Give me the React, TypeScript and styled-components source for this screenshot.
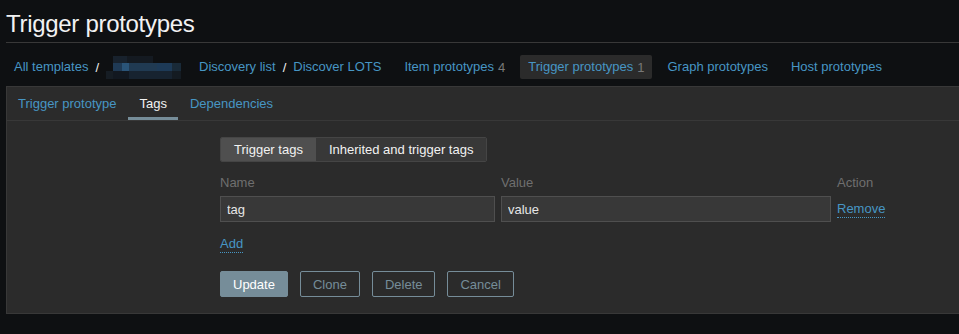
import styled, { createGlobalStyle } from 'styled-components';

const GlobalStyle = createGlobalStyle`
    html, body {
        margin: 0;
        padding: 0;
        background: #0e1012;
    }
    body {
        font-family: "Liberation Sans", Arial, sans-serif;
        font-size: 13px;
        color: #f2f2f2;
    }
    * {
        box-sizing: border-box;
    }
`

type Crumb = { label: string; count?: number; active?: boolean }

const menuItems: Crumb[] = [
    { label: 'Item prototypes', count: 4 },
    { label: 'Trigger prototypes', count: 1, active: true },
    { label: 'Graph prototypes' },
    { label: 'Host prototypes' },
]

// pixelated template name, as in the screenshot
const blurBlocks = [
    { x: 7, y: 0, w: 14, h: 7, c: '#18222d' },
    { x: 21, y: 0, w: 26, h: 7, c: '#141a21' },
    { x: 7, y: 7, w: 9, h: 8, c: '#1f3a55' },
    { x: 16, y: 7, w: 7, h: 8, c: '#2a5478' },
    { x: 23, y: 7, w: 28, h: 8, c: '#203a52' },
    { x: 51, y: 7, w: 15, h: 8, c: '#1d3a57' },
    { x: 66, y: 7, w: 9, h: 8, c: '#192a38' },
    { x: 0, y: 15, w: 7, h: 8, c: '#161d24' },
    { x: 7, y: 15, w: 16, h: 8, c: '#121820' },
    { x: 23, y: 15, w: 43, h: 8, c: '#172330' },
    { x: 66, y: 15, w: 9, h: 8, c: '#141b22' },
]

const BlurredName = () => (
    <BlurWrap>
        <svg width="75" height="24" viewBox="0 0 75 24">
            {blurBlocks.map((b, i) => (
                <rect key={i} x={b.x} y={b.y + 1} width={b.w} height={b.h} fill={b.c} />
            ))}
        </svg>
    </BlurWrap>
)

const App = () => {
    return (
        <>
            <GlobalStyle />
            <Page>
                <Header>
                    <Title>Trigger prototypes</Title>
                </Header>

                <Breadcrumbs>
                    <CrumbGroup>
                        <Link href="#">All templates</Link>
                        <Slash>/</Slash>
                        <BlurredName />
                    </CrumbGroup>
                    <CrumbGroup>
                        <Link href="#">Discovery list</Link>
                        <Slash>/</Slash>
                        <Link href="#">Discover LOTS</Link>
                    </CrumbGroup>
                    {menuItems.map((item) => (
                        <CrumbGroup key={item.label} $active={item.active}>
                            <Link href="#">{item.label}</Link>
                            {item.count !== undefined && <Count>{item.count}</Count>}
                        </CrumbGroup>
                    ))}
                </Breadcrumbs>

                <Panel>
                    <TabBar>
                        <Tab>Trigger prototype</Tab>
                        <Tab $active>Tags</Tab>
                        <Tab>Dependencies</Tab>
                    </TabBar>

                    <FormBody>
                        <Segmented>
                            <Segment $selected>Trigger tags</Segment>
                            <Segment>Inherited and trigger tags</Segment>
                        </Segmented>

                        <TagTable>
                            <ColHead>Name</ColHead>
                            <ColHead>Value</ColHead>
                            <ColHead>Action</ColHead>
                            <TextInput defaultValue="tag" />
                            <TextInput defaultValue="value" />
                            <ActionCell>
                                <DottedLink>Remove</DottedLink>
                            </ActionCell>
                        </TagTable>

                        <AddRow>
                            <DottedLink>Add</DottedLink>
                        </AddRow>

                        <ButtonRow>
                            <Button $primary>Update</Button>
                            <Button>Clone</Button>
                            <Button>Delete</Button>
                            <Button>Cancel</Button>
                        </ButtonRow>
                    </FormBody>
                </Panel>
            </Page>
        </>
    );
}

export default App;

const Page = styled.div`
    padding-left: 6px;
    width: 100%;
    min-height: 334px;
`

const Header = styled.header`
    padding: 12px 0 6px;
    border-bottom: 1px solid #383838;
`

const Title = styled.h1`
    margin: 0;
    font-size: 24px;
    line-height: 24px;
    font-weight: 400;
    letter-spacing: -0.3px;
    color: #f2f2f2;
`

const Breadcrumbs = styled.nav`
    display: flex;
    align-items: center;
    gap: 7px;
    padding: 12px 0 7px;
`

const CrumbGroup = styled.div<{ $active?: boolean }>`
    display: flex;
    align-items: center;
    height: 24px;
    padding: 0 8px;
    border-radius: 2px;
    background: ${(p) => (p.$active ? '#2b2b2b' : 'transparent')};
`

const Link = styled.a`
    color: #4796c4;
    text-decoration: none;
    line-height: 24px;
    white-space: nowrap;
`

const Slash = styled.span`
    color: #f2f2f2;
    margin: 0 7px;
`

const Count = styled.span`
    color: #787878;
    margin-left: 4px;
`

const BlurWrap = styled.span`
    display: flex;
    height: 24px;
    margin-right: -5px;
`

const Panel = styled.section`
    background: #2b2b2b;
    border: 1px solid #383838;
    border-right: none;
`

const TabBar = styled.div`
    display: flex;
    border-bottom: 1px solid #383838;
`

const Tab = styled.div<{ $active?: boolean }>`
    height: 33px;
    line-height: 33px;
    padding: 0 11px 0 12px;
    color: ${(p) => (p.$active ? '#f2f2f2' : '#4796c4')};
    box-shadow: ${(p) => (p.$active ? 'inset 0 -3px 0 #768d99' : 'none')};
    cursor: pointer;

    &:first-child {
        padding-left: 11px;
    }
`

const FormBody = styled.div`
    display: flex;
    flex-direction: column;
    align-items: flex-start;
    padding: 16px 0 16px 213px;
`

const Segmented = styled.div`
    display: flex;
    height: 25px;
    border: 1px solid #454545;
    border-radius: 2px;
    overflow: hidden;
`

const Segment = styled.div<{ $selected?: boolean }>`
    line-height: 23px;
    padding: 0 13px;
    background: ${(p) => (p.$selected ? '#4f4f4f' : '#383838')};
    color: #f2f2f2;
    white-space: nowrap;
`

const TagTable = styled.div`
    display: grid;
    grid-template-columns: 275px 330px auto;
    grid-template-rows: 26px 26px;
    column-gap: 6px;
    margin-top: 8px;
`

const ColHead = styled.div`
    color: #6f6f6f;
    line-height: 26px;
`

const TextInput = styled.input`
    height: 26px;
    width: 100%;
    padding: 0 6px;
    background: #383838;
    border: 1px solid #4f4f4f;
    color: #e6e6e6;
    font-family: inherit;
    font-size: 13px;
    outline: none;
`

const ActionCell = styled.div`
    display: flex;
    align-items: center;
`

const DottedLink = styled.a`
    display: inline-block;
    color: #4796c4;
    line-height: 16px;
    border-bottom: 1px dotted #4796c4;
    cursor: pointer;
`

const AddRow = styled.div`
    margin-top: 14px;
`

const ButtonRow = styled.div`
    display: flex;
    gap: 12px;
    margin-top: 18px;
`

const Button = styled.button<{ $primary?: boolean }>`
    height: 26px;
    padding: 0 12px;
    border-radius: 2px;
    font-family: inherit;
    font-size: 13px;
    border: 1px solid #768d99;
    background: ${(p) => (p.$primary ? '#768d99' : 'transparent')};
    color: ${(p) => (p.$primary ? '#ffffff' : '#768d99')};
    cursor: pointer;
`
